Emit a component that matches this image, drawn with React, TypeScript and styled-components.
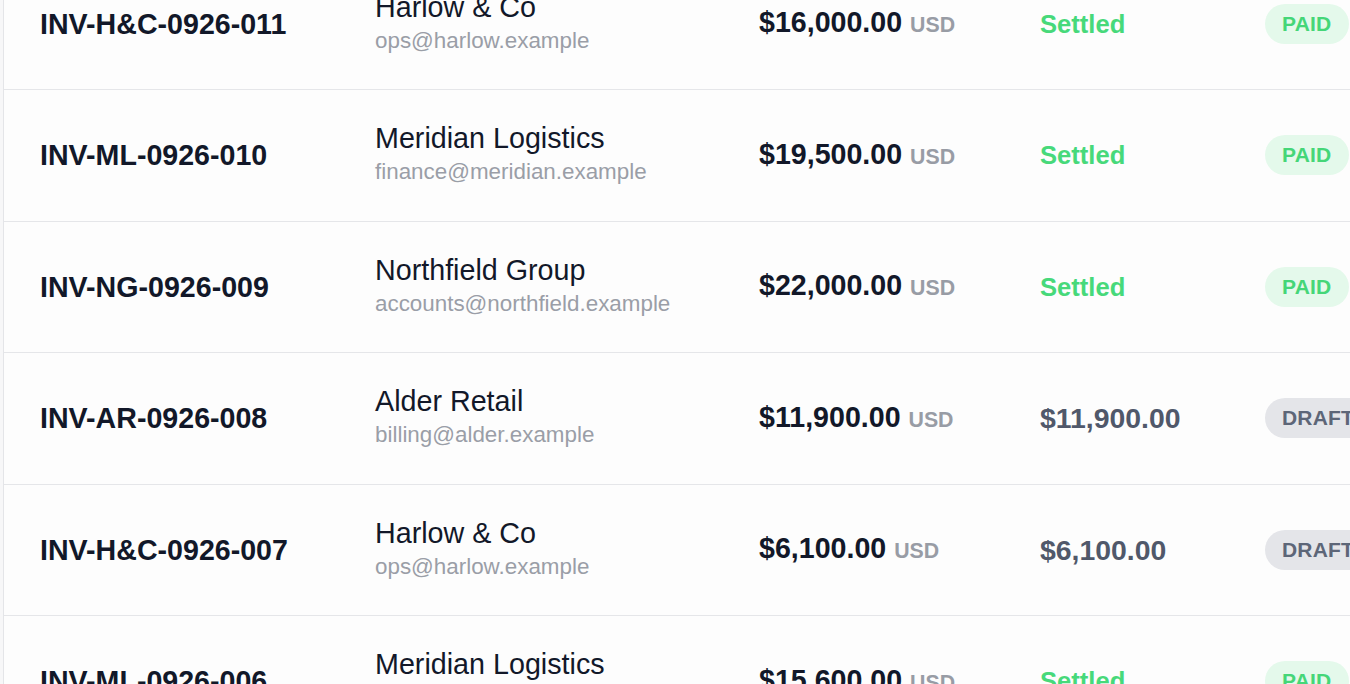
import React from "react";
import styled, { createGlobalStyle } from "styled-components";

const GlobalStyle = createGlobalStyle`
  html, body {
    margin: 0;
    padding: 0;
    background: #f7f7f8;
    overflow: hidden;
  }
  body {
    font-family: "Liberation Sans", Arial, Helvetica, sans-serif;
    -webkit-font-smoothing: antialiased;
  }
`;

type Invoice = {
  number: string;
  customer: string;
  email: string;
  amount: string;
  currency: string;
  status: "paid" | "draft";
};

const invoices: Invoice[] = [
  { number: "INV-H&C-0926-011", customer: "Harlow & Co", email: "ops@harlow.example", amount: "$16,000.00", currency: "USD", status: "paid" },
  { number: "INV-ML-0926-010", customer: "Meridian Logistics", email: "finance@meridian.example", amount: "$19,500.00", currency: "USD", status: "paid" },
  { number: "INV-NG-0926-009", customer: "Northfield Group", email: "accounts@northfield.example", amount: "$22,000.00", currency: "USD", status: "paid" },
  { number: "INV-AR-0926-008", customer: "Alder Retail", email: "billing@alder.example", amount: "$11,900.00", currency: "USD", status: "draft" },
  { number: "INV-H&C-0926-007", customer: "Harlow & Co", email: "ops@harlow.example", amount: "$6,100.00", currency: "USD", status: "draft" },
  { number: "INV-ML-0926-006", customer: "Meridian Logistics", email: "finance@meridian.example", amount: "$15,600.00", currency: "USD", status: "paid" },
];

const Frame = styled.div`
  margin-left: 3px;
  height: 684px;
  background: #fdfdfd;
  border-left: 1px solid #e4e5e8;
  overflow: hidden;
`;

// the list is scrolled part way, so the first row is cut at the top
const List = styled.div`
  margin-top: -41.5px;
`;

const Row = styled.div`
  box-sizing: border-box;
  height: 131.5px;
  display: grid;
  grid-template-columns: 335px 384px 281px 225px 1fr;
  align-items: center;
  padding-left: 36px;
  border-bottom: 1px solid #e5e6e9;
  white-space: nowrap;
`;

const InvoiceNo = styled.div`
  font-size: 28.6px;
  line-height: 34px;
  font-weight: 700;
  color: #121829;
`;

const Customer = styled.div`
  display: flex;
  flex-direction: column;
`;

const Name = styled.span`
  font-size: 28.7px;
  line-height: 34px;
  color: #121829;
`;

const Email = styled.span`
  font-size: 22.4px;
  line-height: 34px;
  color: #9a9ea7;
`;

const Amount = styled.div`
  font-size: 28.6px;
  line-height: 34px;
  font-weight: 700;
  color: #121829;
`;

const Currency = styled.span`
  margin-left: 8px;
  font-size: 21.3px;
  font-weight: 700;
  color: #989ca5;
`;

const Balance = styled.div<{ $settled: boolean }>`
  font-size: ${(p) => (p.$settled ? "25.6px" : "28.4px")};
  line-height: 34px;
  font-weight: 700;
  color: ${(p) => (p.$settled ? "#47d97a" : "#50586a")};
`;

const Badge = styled.span<{ $tone: "paid" | "draft" }>`
  justify-self: start;
  display: inline-flex;
  align-items: center;
  height: 40px;
  padding: 0 18px 0 17px;
  border-radius: 999px;
  font-size: 21px;
  font-weight: 700;
  letter-spacing: 0.2px;
  background: ${(p) => (p.$tone === "paid" ? "#e4f9eb" : "#e4e5e9")};
  color: ${(p) => (p.$tone === "paid" ? "#45d678" : "#5d6678")};
`;

export default function App() {
  return (
    <>
      <GlobalStyle />
      <Frame>
        <List>
          {invoices.map((inv) => {
            const paid = inv.status === "paid";
            return (
              <Row key={inv.number}>
                <InvoiceNo>{inv.number}</InvoiceNo>
                <Customer>
                  <Name>{inv.customer}</Name>
                  <Email>{inv.email}</Email>
                </Customer>
                <Amount>
                  {inv.amount}
                  <Currency>{inv.currency}</Currency>
                </Amount>
                <Balance $settled={paid}>{paid ? "Settled" : inv.amount}</Balance>
                <Badge $tone={inv.status}>{paid ? "PAID" : "DRAFT"}</Badge>
              </Row>
            );
          })}
        </List>
      </Frame>
    </>
  );
}
